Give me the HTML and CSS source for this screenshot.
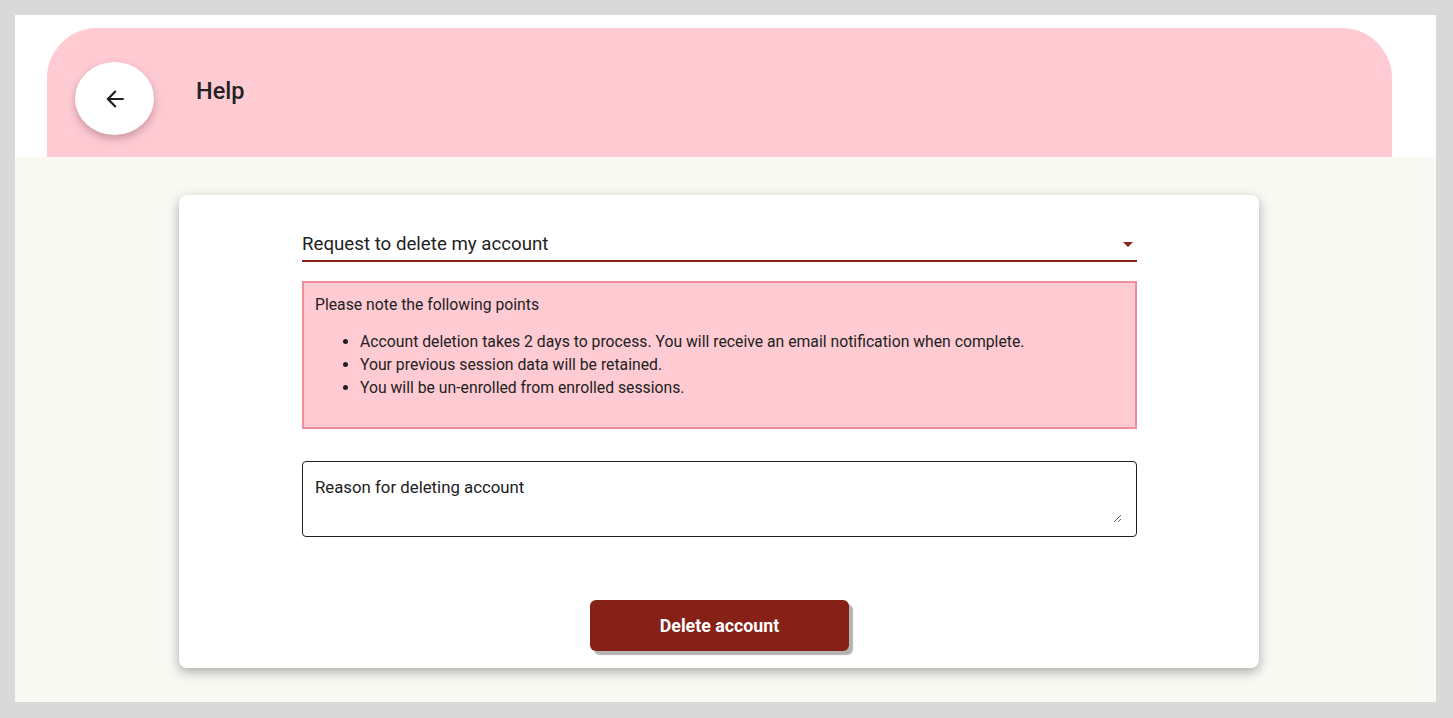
FILE: index.html
```html
<!DOCTYPE html>
<html lang="en">
<head>
<meta charset="utf-8">
<title>Help</title>
<link rel="stylesheet" href="styles.css">
</head>
<body>
<div class="frame">
  <div class="top">
    <header class="header">
      <button class="back" aria-label="Back">
        <svg width="24" height="24" viewBox="0 0 24 24"><path d="M20 11H7.830l5.59-5.59L12 4l-8 8 8 8 1.41-1.41L7.83 13H20v-2z" fill="#1f1f1f"/></svg>
      </button>
      <h1 class="title">Help</h1>
    </header>
  </div>
  <main class="content">
    <section class="card">
      <div class="form">
        <div class="select">
          <span class="select-text">Request to delete my account</span>
          <span class="caret"></span>
        </div>
        <div class="note">
          <p class="note-title">Please note the following points</p>
          <ul class="note-list">
            <li>Account deletion takes 2 days to process. You will receive an email notification when complete.</li>
            <li>Your previous session data will be retained.</li>
            <li>You will be un-enrolled from enrolled sessions.</li>
          </ul>
        </div>
        <div class="reason">
          <textarea class="reason-input" placeholder="Reason for deleting account"></textarea>
        </div>
        <div class="actions">
          <button class="delete">Delete account</button>
        </div>
      </div>
    </section>
  </main>
</div>
</body>
</html>
```

FILE: styles.css
```css
* { box-sizing: border-box; }
html, body { margin: 0; padding: 0; }
body {
  background: #d9d9d9;
  font-family: Roboto, "Noto Sans", Arial, sans-serif;
  color: #212121;
  width: 1453px;
  height: 718px;
  overflow: hidden;
}
.frame {
  margin: 15px 0 0 15px;
  width: 1421px;
  height: 687px;
  display: flex;
  flex-direction: column;
}
.top {
  background: #ffffff;
  padding: 13px 44px 0 32px;
}
.header {
  height: 129px;
  background: #ffcbd3;
  border-radius: 50px 50px 0 0;
  display: flex;
  align-items: flex-start;
  padding: 34px 0 0 28px;
}
.back {
  width: 79px;
  height: 73px;
  border-radius: 50%;
  border: none;
  background: #ffffff;
  box-shadow: 0 4px 9px rgba(80, 30, 40, 0.3);
  display: flex;
  align-items: center;
  justify-content: center;
  padding: 0;
  margin: 0;
}
.back svg { width: 26px; height: 26px; }
.title {
  margin: 15px 0 0 42px;
  font-size: 23.5px;
  font-weight: 500;
  line-height: 28px;
  color: #222222;
}
.content {
  flex: 1;
  background: #f9f9f4;
  padding: 38px 0 0 164px;
}
.card {
  width: 1080px;
  height: 473px;
  background: #ffffff;
  border-radius: 8px;
  box-shadow: 0 4px 12px rgba(0, 0, 0, 0.32);
  padding: 31px 0 0 123px;
}
.form { width: 835px; }
.select {
  height: 36px;
  border-bottom: 2px solid #86221a;
  display: flex;
  align-items: center;
  justify-content: space-between;
  padding: 2px 4px 0 0;
}
.select-text {
  font-size: 18.7px;
  line-height: 24px;
  color: #1f1f1f;
}
.caret {
  width: 0;
  height: 0;
  border-left: 5px solid transparent;
  border-right: 5px solid transparent;
  border-top: 5px solid #86221a;
}
.note {
  margin-top: 19px;
  height: 148px;
  background: #ffcbd3;
  border: 2px solid #ee8e9c;
  padding: 10px 12px 0 11px;
  font-size: 15.75px;
  line-height: 23px;
}
.note-title { margin: 0; }
.note-list {
  margin: 14px 0 0 0;
  padding-left: 45px;
}
.reason {
  margin-top: 32px;
  width: 835px;
  height: 76px;
  border: 1px solid #1f1f1f;
  border-radius: 4px;
  padding: 14px 14px 14px 12px;
  background: #fff;
}
.reason-input {
  display: block;
  width: 100%;
  height: 47px;
  border: none;
  outline: none;
  padding: 0;
  margin: 0;
  resize: vertical;
  font-family: Roboto, "Noto Sans", Arial, sans-serif;
  font-size: 16.8px;
  line-height: 22px;
  color: #212121;
  background: transparent;
}
.reason-input::placeholder { color: #212121; opacity: 1; }
.actions {
  margin-top: 63px;
  display: flex;
  justify-content: center;
}
.delete {
  width: 259px;
  height: 51px;
  border: none;
  border-radius: 6px;
  background: #862118;
  color: #ffffff;
  font-family: Roboto, "Noto Sans", Arial, sans-serif;
  font-size: 17.8px;
  font-weight: 700;
  box-shadow: 4px 4px 1px #b3b3b3;
}
```
